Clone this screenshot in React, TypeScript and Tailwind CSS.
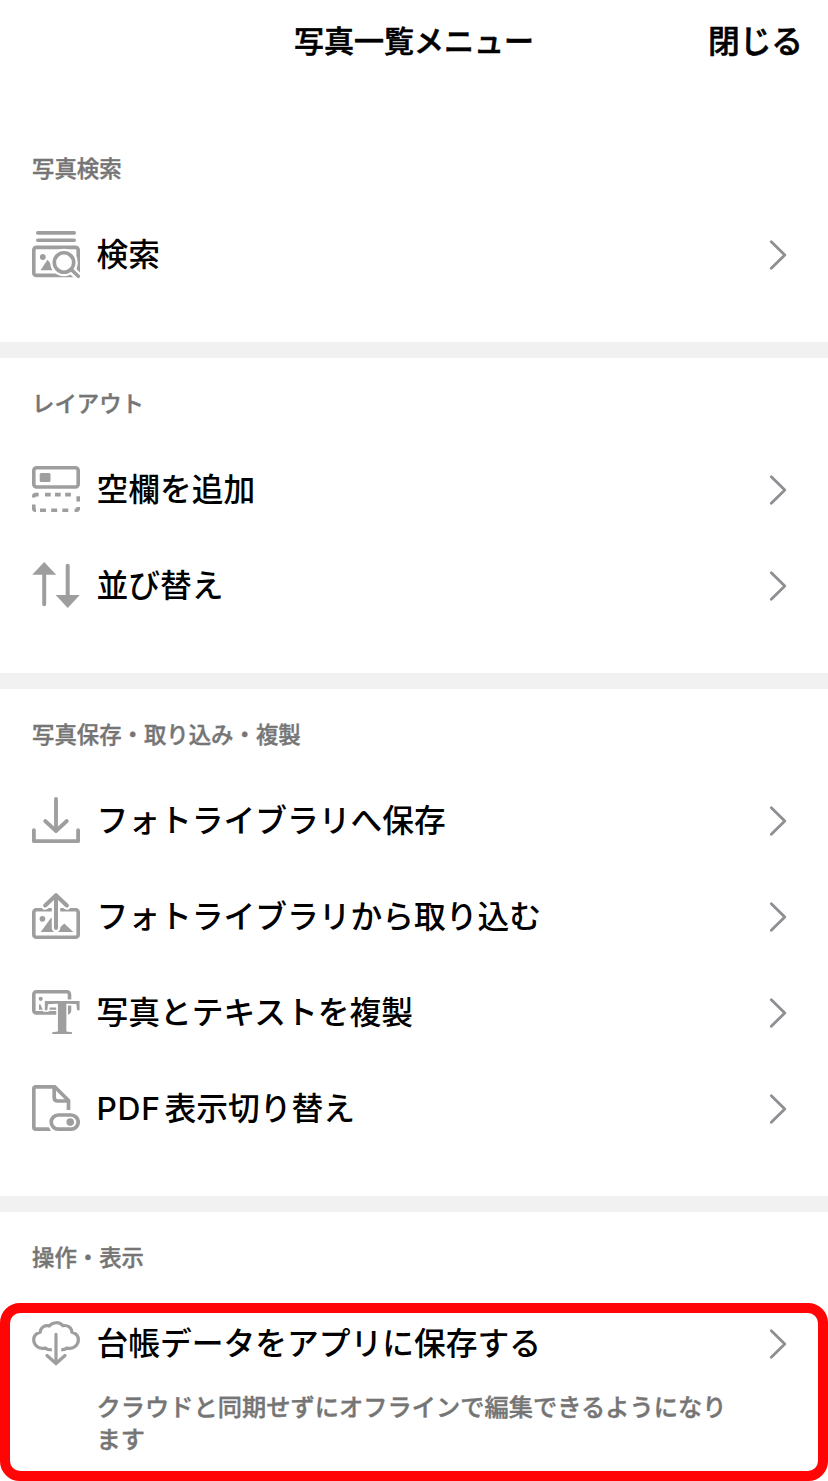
import React from "react";

const SearchIcon = () => (
  <svg className="size-12 shrink-0" viewBox="0 0 48 48" fill="none" stroke="#9e9e9e" strokeWidth={3.6} strokeLinecap="round">
    <path d="M5.8 1.9h36.4M5.8 9.2h36.4" />
    <rect x={1.8} y={16.4} width={44.4} height={28} rx={2.5} />
    <circle cx={10.8} cy={26} r={2.9} fill="#9e9e9e" stroke="none" />
    <path d="M8.5 39.2 15.5 28.8 24 39.2z" fill="#9e9e9e" stroke="none" />
    <circle cx={32} cy={31.5} r={13.8} fill="#fff" stroke="none" />
    <path d="M39.5 39 48 47" stroke="#fff" strokeWidth={8} />
    <circle cx={32} cy={31.5} r={9.7} />
    <path d="m39.2 38.5 7.1 6.8" />
  </svg>
);

const AddBlankIcon = () => (
  <svg className="size-12 shrink-0" viewBox="0 0 48 48" fill="none" stroke="#9e9e9e" strokeWidth={3.6}>
    <rect x={1.8} y={1.8} width={44.4} height={19.2} rx={2.8} />
    <rect x={7.7} y={7} width={10.8} height={9} rx={1.5} fill="#9e9e9e" stroke="none" />
    <path d="M1.8 31.6v-1.2q0-1.8 1.8-1.8h3.1M13 28.6h5.7M23 28.6h5.7M33.2 28.6h5.7M46.2 30.2v5.4M1.8 38.6v3.8q0 1.8 1.8 1.8h.4M8 44.3h6M19.2 44.3h6M30.3 44.3h6M42.6 44.3h1.8q1.8 0 1.8-1.8v-1.4" />
  </svg>
);

const SortIcon = () => (
  <svg className="size-12 shrink-0" viewBox="0 0 48 48" fill="#9e9e9e">
    <path d="M12.2 0 24.2 12.8H.2zM35.7 46 47.8 33H23.7z" />
    <path d="M12.2 10v32.2M35.7 3.7V36" stroke="#9e9e9e" strokeWidth={4} strokeLinecap="round" />
  </svg>
);

const DownloadIcon = () => (
  <svg className="size-12 shrink-0" viewBox="0 0 48 48" fill="none" stroke="#9e9e9e" strokeWidth={3.8} strokeLinecap="round" strokeLinejoin="round">
    <path d="M24 2v31.5M13.2 24 24 34l10.8-10M1.9 33.2v11h44.2v-11" />
  </svg>
);

const ImportIcon = () => (
  <svg className="size-12 shrink-0" viewBox="0 0 48 48" fill="none" stroke="#9e9e9e" strokeWidth={3.6} strokeLinecap="round" strokeLinejoin="round">
    <rect x={1.8} y={16.7} width={44.4} height={27.5} rx={2.5} />
    <circle cx={10.4} cy={25.8} r={2.9} fill="#9e9e9e" stroke="none" />
    <path d="M8.7 39 19.3 24.5 29 39zM28 34.5 32.3 30.5 41.3 39H26z" fill="#9e9e9e" stroke="none" />
    <path d="M24 12v23M13.2 12.5 24 2.5l10.8 10" stroke="#fff" strokeWidth={8.5} />
    <path d="M24 3v32M13.2 12.5 24 2.2l10.8 10.3" strokeWidth={4} />
  </svg>
);

const DuplicateIcon = () => (
  <svg className="size-12 shrink-0 overflow-visible" viewBox="0 0 48 48" fill="none" stroke="#9e9e9e" strokeWidth={3.6}>
    <rect x={1.8} y={2.8} width={35.7} height={21.1} rx={2.5} />
    <circle cx={8.7} cy={9.8} r={2.1} fill="#9e9e9e" stroke="none" />
    <path d="M7 20.8v-5L8.2 15l2.6 5.8zM17.5 20.8v-2.4h7v2.4z" fill="#9e9e9e" stroke="none" />
    <text
      x={12}
      y={45}
      fontFamily="Liberation Serif, serif"
      fontWeight={700}
      fontSize={50}
      textLength={36.4}
      lengthAdjust="spacingAndGlyphs"
      fill="#9e9e9e"
      stroke="#fff"
      strokeWidth={3}
      paintOrder="stroke"
    >
      T
    </text>
  </svg>
);

const PdfIcon = () => (
  <svg className="size-12 shrink-0" viewBox="0 0 48 48" fill="none" stroke="#9e9e9e" strokeWidth={3.7} strokeLinejoin="round">
    <path d="M18.5 44.2H3.8q-2 0-2-2V3.8q0-2 2-2h18.9L36.5 15.5V25" />
    <path d="M22.2 2v10.5q0 3.5 3.5 3.5h11" />
    <rect x={19.6} y={30.2} width={26.7} height={14} rx={7} stroke="#fff" strokeWidth={8} />
    <rect x={19.2} y={30} width={27} height={14.2} rx={7.1} />
    <circle cx={38.2} cy={37.1} r={3.8} fill="#9e9e9e" stroke="none" />
  </svg>
);

const CloudIcon = () => (
  <svg className="size-12 shrink-0" viewBox="0 0 48 48" fill="none" stroke="#9e9e9e" strokeWidth={3.2}>
    <path d="M19.8 29.4C17 30.2 15 29.6 13.2 28.1 7.5 29.6 1.7 25.6 1.7 19.8c0-3.6 2.6-6.6 6.4-7.6C8.7 7.4 13 4.6 17.3 5.9c3.8-4.2 9.8-4.2 13.6-.2 4.5-1 8.6 1.8 9.1 6.5 3.8 1 6.4 4 6.4 7.6 0 5.8-5.7 9.8-11.4 8.3-1.8 1.4-3.6 1.8-5.7 1.3" />
    <path d="M24 14.4v28.4M15 35.5l9 8 9-8" strokeLinecap="round" />
  </svg>
);

const ChevronIcon = () => (
  <svg className="ml-auto h-8 w-5 shrink-0" viewBox="0 0 20 32" fill="none" stroke="#8e8e93" strokeWidth={2.8} strokeLinecap="round" strokeLinejoin="round">
    <path d="M3.3 2.8 16.8 16 3.3 29.2" />
  </svg>
);

type Item = { label: string; Icon: () => React.JSX.Element; prefix?: string; note?: string };

const sections: { title: string; items: Item[] }[] = [
  {
    title: "写真検索",
    items: [{ label: "検索", Icon: SearchIcon }],
  },
  {
    title: "レイアウト",
    items: [
      { label: "空欄を追加", Icon: AddBlankIcon },
      { label: "並び替え", Icon: SortIcon },
    ],
  },
  {
    title: "写真保存・取り込み・複製",
    items: [
      { label: "フォトライブラリへ保存", Icon: DownloadIcon },
      { label: "フォトライブラリから取り込む", Icon: ImportIcon },
      { label: "写真とテキストを複製", Icon: DuplicateIcon },
      { prefix: "PDF", label: "表示切り替え", Icon: PdfIcon },
    ],
  },
  {
    title: "操作・表示",
    items: [
      {
        label: "台帳データをアプリに保存する",
        Icon: CloudIcon,
        note: "クラウドと同期せずにオフラインで編集できるようになります",
      },
    ],
  },
];

const MenuItem = ({ label, Icon, prefix, note }: Item) => (
  <li>
    <div className="flex h-24 items-center pl-8 pr-10">
      <Icon />
      <span className="ml-[16.5px] text-[31.75px] leading-[48px] font-medium text-black">
        {prefix && <span className="mr-1 tracking-[0.7px]">{prefix}</span>}
        {label}
      </span>
      <ChevronIcon />
    </div>
    {note && (
      <p className="w-[736px] pl-[96.5px] text-[24.25px] leading-8 font-medium text-[#757575] [-webkit-text-stroke:0.4px_#757575]">
        {note}
      </p>
    )}
  </li>
);

const App = () => {
  return (
    <div className="relative h-[1481px] w-[828px] overflow-hidden bg-white [font-family:Inter,'Noto_Sans_CJK_JP',sans-serif]">
      <header className="grid h-[123px] grid-cols-[1fr_auto_1fr] items-start pt-[17px]">
        <h1 className="col-start-2 text-center text-[30px] leading-[48px] font-medium whitespace-nowrap text-black [-webkit-text-stroke:0.6px_#000]">
          写真一覧メニュー
        </h1>
        <button className="pt-px pr-[25px] text-right text-[31.7px] leading-[48px] font-medium text-black [-webkit-text-stroke:0.6px_#000]">
          閉じる
        </button>
      </header>
      {sections.map((section) => (
        <section key={section.title} className="border-b-16 border-[#f1f1f1] pb-[39px] last-of-type:border-b-0">
          <h2 className="h-[84px] pt-[30px] pl-8 text-[22.4px] leading-8 font-medium text-[#757575] [-webkit-text-stroke:0.4px_#757575]">
            {section.title}
          </h2>
          <ul>
            {section.items.map((item) => (
              <MenuItem key={item.label} {...item} />
            ))}
          </ul>
        </section>
      ))}
      <div className="pointer-events-none absolute inset-x-0 top-[1303px] h-[178px] rounded-[20px] border-10 border-[#ff0505]" />
    </div>
  );
};

export default App;
